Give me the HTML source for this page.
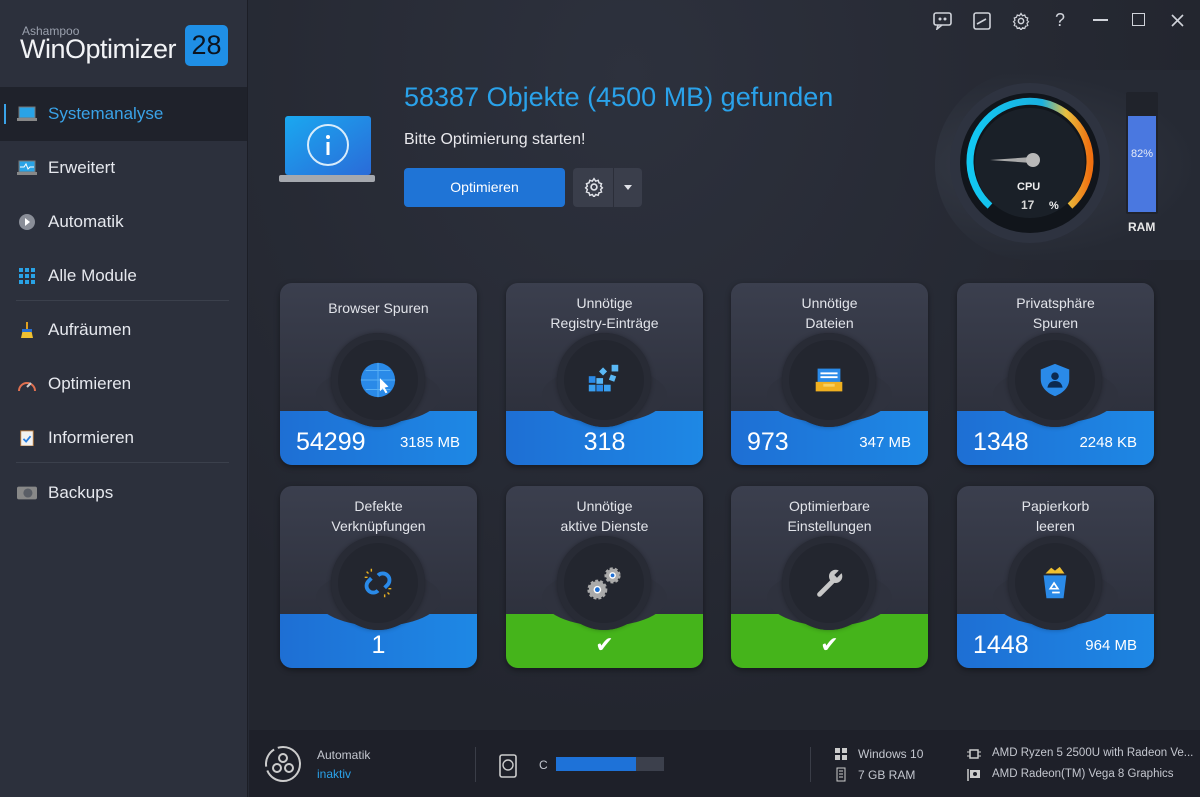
<!DOCTYPE html>
<html><head><meta charset="utf-8"><style>
*{margin:0;padding:0;box-sizing:border-box}
body{width:1200px;height:797px;overflow:hidden;background:#262a35;font-family:"Liberation Sans",sans-serif;color:#e6e8ee;position:relative}
.side{position:absolute;left:0;top:0;width:248px;height:797px;background:#2c303c;border-right:1px solid #1c1e26}
.logo1{position:absolute;left:22px;top:24px;font-size:12px;color:#9aa0ad}
.logo2{position:absolute;left:20px;top:34px;font-size:27px;color:#f2f3f6;letter-spacing:-0.5px}
.badge{position:absolute;left:185px;top:25px;width:43px;height:41px;background:#1f8fe6;border-radius:5px;color:#0c1420;font-size:27px;text-align:center;line-height:41px}
.nav{position:absolute;left:0;width:247px;height:54px;font-size:17px;line-height:54px;padding-left:48px}
.nav.sel{background:#1f222b;color:#3aa3e8}
.nav.sel:before{content:"";position:absolute;left:4px;top:17px;width:2px;height:20px;background:#3aa3e8}
.ic{position:absolute;left:17px;top:19px;width:20px;height:16px}
.sep{position:absolute;left:16px;width:213px;height:1px;background:#3b404c}
.main{position:absolute;left:249px;top:0;width:951px;height:730px;background:radial-gradient(ellipse at 40% 10%,#2d313d,#23262f 70%)}
.title{position:absolute;left:404px;top:82px;font-size:27px;color:#2aa2ea}
.sub{position:absolute;left:404px;top:131px;font-size:16px;color:#e8e8ec}
.btn{position:absolute;left:404px;top:168px;width:161px;height:39px;background:#1f74d6;border-radius:4px;text-align:center;line-height:39px;font-size:14px;color:#fff}
.gbtn{position:absolute;left:573px;top:168px;width:69px;height:39px;background:#3a3e4b;border-radius:4px}
.card{position:absolute;width:197px;height:182px;border-radius:12px;overflow:hidden;background:linear-gradient(#3b3f4e,#2e313d 70%);box-shadow:0 2px 6px rgba(0,0,0,.4)}
.card .t{position:absolute;top:10px;left:0;right:0;text-align:center;font-size:14px;line-height:20px;color:#e2e4ea}
.band{position:absolute;left:0;right:0;bottom:0;height:54px;background:linear-gradient(90deg,#1e6fd4,#1e88e5)}
.band.g{background:#45b41b}
.notch{position:absolute;left:36px;top:84px;width:125px;height:56px;border-radius:50%;background:#2f323e}
.circ{position:absolute;left:51px;top:50px;width:94px;height:94px;border-radius:50%;background:#23262f;box-shadow:inset 0 0 0 7px #282b35,0 0 5px rgba(0,0,0,.3)}
.n1{position:absolute;left:16px;bottom:8px;font-size:25px;color:#fff}
.n2{position:absolute;right:17px;bottom:14px;font-size:15px;color:#fff}
.nc{position:absolute;left:0;right:0;bottom:8px;text-align:center;font-size:25px;color:#fff}
.iconw{position:absolute;left:79px;top:78px;width:38px;height:38px}
.bot{position:absolute;left:249px;top:730px;width:951px;height:67px;background:#1e2029;font-size:12px;color:#c4c7cf;white-space:nowrap}
.tb{position:absolute;top:12px;color:#d0d3da;font-size:16px}
</style></head><body>
<div class="side">
 <div class="logo1">Ashampoo</div>
 <div class="logo2">WinOptimizer</div>
 <div class="badge">28</div>
 <div class="nav sel" style="top:87px"><svg class="ic" viewBox="0 0 20 16"><rect x="2" y="1" width="16" height="11" fill="#29a3e6" stroke="#777" /><rect x="0" y="12" width="20" height="3" fill="#888"/></svg>Systemanalyse</div>
 <div class="nav" style="top:141px"><svg class="ic" viewBox="0 0 20 16"><rect x="2" y="1" width="16" height="11" fill="#29a3e6" stroke="#777"/><path d="M3 7h4l2-3 2 5 2-2h4" stroke="#fff" fill="none"/><rect x="0" y="12" width="20" height="3" fill="#888"/></svg>Erweitert</div>
 <div class="nav" style="top:195px"><svg class="ic" viewBox="0 0 20 16"><circle cx="10" cy="8" r="8" fill="#8a8e98"/><path d="M8 4l5 4-5 4z" fill="#fff"/></svg>Automatik</div>
 <div class="nav" style="top:249px"><svg class="ic" viewBox="0 0 20 16"><g fill="#29a3e6"><rect x="2" y="0" width="4" height="4"/><rect x="8" y="0" width="4" height="4"/><rect x="14" y="0" width="4" height="4"/><rect x="2" y="6" width="4" height="4"/><rect x="8" y="6" width="4" height="4"/><rect x="14" y="6" width="4" height="4"/><rect x="2" y="12" width="4" height="4"/><rect x="8" y="12" width="4" height="4"/><rect x="14" y="12" width="4" height="4"/></g></svg>Alle Module</div>
 <div class="sep" style="top:300px"></div>
 <div class="nav" style="top:303px"><svg class="ic" viewBox="0 0 20 16"><rect x="9" y="0" width="2" height="7" fill="#e0a020"/><path d="M4 16l2-9h8l2 9z" fill="#f0c030"/><rect x="5" y="7" width="10" height="3" fill="#2a6fd0"/></svg>Aufräumen</div>
 <div class="nav" style="top:357px"><svg class="ic" viewBox="0 0 20 16"><path d="M2 15a8 8 0 1 1 16 0" stroke="#e07050" stroke-width="2" fill="none"/><path d="M10 11l4-4" stroke="#ccc" stroke-width="2"/></svg>Optimieren</div>
 <div class="nav" style="top:411px"><svg class="ic" viewBox="0 0 20 18"><rect x="3" y="1" width="14" height="17" fill="#f2f2f2" stroke="#c08040"/><path d="M6 10l3 3 5-6" stroke="#2a7fe0" stroke-width="2" fill="none"/></svg>Informieren</div>
 <div class="sep" style="top:462px"></div>
 <div class="nav" style="top:466px"><svg class="ic" viewBox="0 0 22 16"><rect x="0" y="1" width="22" height="14" rx="2" fill="#888"/><circle cx="12" cy="8" r="5" fill="#5a5e66"/></svg>Backups</div>
</div>
<div class="main"></div>
<div class="tb" style="left:933px"><svg width="20" height="18" viewBox="0 0 20 18"><rect x="1" y="1" width="17" height="12" rx="2" stroke="#d0d3da" fill="none" stroke-width="1.6"/><path d="M5 13l-1 4 5-4" stroke="#d0d3da" fill="none" stroke-width="1.6"/><circle cx="7" cy="7" r="1.5" fill="#d0d3da"/><circle cx="12" cy="7" r="1.5" fill="#d0d3da"/></svg></div>
<div class="tb" style="left:973px"><svg width="18" height="18" viewBox="0 0 18 18"><rect x="1" y="1" width="16" height="16" rx="2" stroke="#d0d3da" fill="none" stroke-width="1.6"/><path d="M4 12l9-5" stroke="#d0d3da" stroke-width="1.6"/></svg></div>
<div class="tb" style="left:1012px"><svg width="18" height="18" viewBox="0 0 24 24"><circle cx="12" cy="12" r="3.5" stroke="#d0d3da" fill="none" stroke-width="2"/><path d="M12 2l2 3 3-1 1 3 3 1-1 3 2 2-2 2 1 3-3 1-1 3-3-1-2 3-2-3-3 1-1-3-3-1 1-3-2-2 2-2-1-3 3-1 1-3 3 1z" stroke="#d0d3da" fill="none" stroke-width="1.6"/></svg></div>
<div class="tb" style="left:1055px;top:10px;font-size:18px">?</div>
<div class="tb" style="left:1093px;top:19px;width:15px;height:2px;background:#d0d3da"></div>
<div class="tb" style="left:1132px;top:13px;width:13px;height:13px;border:1.6px solid #d0d3da"></div>
<svg style="position:absolute;left:1171px;top:14px" width="13" height="13" viewBox="0 0 13 13"><path d="M1 1l11 11M12 1L1 12" stroke="#d0d3da" stroke-width="1.6"/></svg>
<svg style="position:absolute;left:279px;top:115px" width="98" height="70" viewBox="0 0 98 70"><defs><linearGradient id="lg" x1="0" y1="0" x2="1" y2="1"><stop offset="0" stop-color="#1aa8f0"/><stop offset="1" stop-color="#2a6bd8"/></linearGradient></defs><rect x="6" y="1" width="86" height="59" rx="3" fill="url(#lg)"/><rect x="0" y="60" width="96" height="7" rx="2" fill="#a5a8ae"/><circle cx="49" cy="30" r="20" stroke="#d8ecfb" stroke-width="2" fill="none"/><rect x="47.5" y="27" width="3" height="13" fill="#fff"/><circle cx="49" cy="22" r="2" fill="#fff"/></svg>
<div class="title">58387 Objekte (4500 MB) gefunden</div>
<div class="sub">Bitte Optimierung starten!</div>
<div class="btn">Optimieren</div>
<div class="gbtn"><svg style="position:absolute;left:11px;top:9px" width="20" height="20" viewBox="0 0 24 24"><circle cx="12" cy="12" r="3.5" stroke="#e0e2e8" fill="none" stroke-width="2"/><path d="M12 2l2 3 3-1 1 3 3 1-1 3 2 2-2 2 1 3-3 1-1 3-3-1-2 3-2-3-3 1-1-3-3-1 1-3-2-2 2-2-1-3 3-1 1-3 3 1z" stroke="#e0e2e8" fill="none" stroke-width="1.8"/></svg><div style="position:absolute;left:40px;top:0;width:1px;height:39px;background:#2b2e39"></div><div style="position:absolute;left:51px;top:17px;border:4px solid transparent;border-top:5px solid #e0e2e8"></div></div>
<!-- gauge -->
<div style="position:absolute;left:935px;top:70px;width:265px;height:190px;background:radial-gradient(ellipse at 30% 50%,#353a46,#262a34 70%);border-radius:95px 0 0 95px"></div>
<svg style="position:absolute;left:945px;top:78px" width="170" height="170" viewBox="0 0 170 170"><circle cx="85" cy="85" r="80" fill="#2e3340"/><circle cx="85" cy="85" r="70" fill="#11151b"/><defs><linearGradient id="ga" x1="0" y1="0" x2="1" y2="0"><stop offset="0" stop-color="#12c8f2"/><stop offset=".6" stop-color="#1ab0e0"/><stop offset=".8" stop-color="#e8c040"/><stop offset="1" stop-color="#f07010"/></linearGradient></defs><path d="M45 128A60 60 0 1 1 125 128" stroke="url(#ga)" stroke-width="7" fill="none"/><circle cx="85" cy="85" r="55" fill="#1a2028"/><path d="M45 82l42-3v6z" fill="#aaa"/><circle cx="88" cy="82" r="7" fill="#b8b8b8"/><text x="72" y="112" font-family="Liberation Sans" font-size="11" font-weight="bold" fill="#eee">CPU</text><text x="76" y="131" font-family="Liberation Sans" font-size="12" font-weight="bold" fill="#d8d8d8">17</text><text x="104" y="131" font-family="Liberation Sans" font-size="11" font-weight="bold" fill="#eee">%</text></svg>
<div style="position:absolute;left:1126px;top:92px;width:32px;height:122px;background:#20232b;border-radius:2px"></div>
<div style="position:absolute;left:1128px;top:116px;width:28px;height:96px;background:#4a78e0;color:#e6ebf8;font-size:11px;text-align:center;padding-top:32px">82%</div>
<div style="position:absolute;left:1128px;top:220px;font-size:12px;font-weight:bold;color:#e8e8e8">RAM</div>

<!-- cards -->
<div class="card" style="left:280px;top:283px"><div class="t" style="top:15px">Browser Spuren</div><div class="band"></div><div class="notch"></div><div class="circ"></div><svg class="iconw" viewBox="0 0 40 40"><circle cx="20" cy="20" r="18" fill="#2a8ae8"/><path d="M2 20h36M20 2v36M7 10h26M7 30h26" stroke="#5ab0f5" stroke-width="1" fill="none"/><path d="M22 18l0 14 3-3 3 5 2-1-3-5 4-1z" fill="#fff"/></svg><div class="n1">54299</div><div class="n2">3185 MB</div></div>
<div class="card" style="left:506px;top:283px"><div class="t">Unnötige<br>Registry-Einträge</div><div class="band"></div><div class="notch"></div><div class="circ"></div><svg class="iconw" viewBox="0 0 40 40"><g fill="#2a8ae8"><rect x="4" y="16" width="7" height="7"/><rect x="4" y="25" width="7" height="7" fill="#3aa0f0"/><rect x="12" y="25" width="7" height="7"/><rect x="20" y="25" width="7" height="7" fill="#3aa0f0"/><rect x="12" y="18" width="7" height="6" fill="#55b5f5"/></g><rect x="16" y="8" width="6" height="6" fill="#5ab8f5" transform="rotate(45 19 11)"/><rect x="28" y="4" width="7" height="7" fill="#5ab8f5"/><rect x="26" y="15" width="6" height="6" fill="#5ab8f5" transform="rotate(20 29 18)"/></svg><div class="nc">318</div></div>
<div class="card" style="left:731px;top:283px"><div class="t">Unnötige<br>Dateien</div><div class="band"></div><div class="notch"></div><div class="circ"></div><svg class="iconw" viewBox="0 0 40 40"><rect x="8" y="8" width="24" height="16" fill="#2a8ae8"/><rect x="11" y="12" width="18" height="2" fill="#fff"/><rect x="11" y="16" width="18" height="2" fill="#fff"/><path d="M6 22h28v10H6z" fill="#f0b020"/><rect x="14" y="24" width="12" height="3" fill="#f8d060"/></svg><div class="n1">973</div><div class="n2">347 MB</div></div>
<div class="card" style="left:957px;top:283px"><div class="t">Privatsphäre<br>Spuren</div><div class="band"></div><div class="notch"></div><div class="circ"></div><svg class="iconw" viewBox="0 0 40 40"><path d="M20 3l15 6v10c0 9-7 15-15 18C12 34 5 28 5 19V9z" fill="#2a8ae8"/><circle cx="20" cy="16" r="4" fill="#0c2a50"/><path d="M12 28c1-5 4-7 8-7s7 2 8 7z" fill="#0c2a50"/></svg><div class="n1">1348</div><div class="n2">2248 KB</div></div>

<div class="card" style="left:280px;top:486px"><div class="t">Defekte<br>Verknüpfungen</div><div class="band"></div><div class="notch"></div><div class="circ"></div><svg class="iconw" viewBox="0 0 40 40"><path d="M20 12a7 7 0 0 1 10 10l-3 3M20 28a7 7 0 0 1-10-10l3-3" stroke="#2a8ae8" stroke-width="4" fill="none"/><g stroke="#e8b020" stroke-width="1.5"><path d="M8 8l2 2M6 14h3M13 5v3M32 32l-2-2M34 26h-3M27 35v-3"/></g></svg><div class="nc">1</div></div>
<div class="card" style="left:506px;top:486px"><div class="t">Unnötige<br>aktive Dienste</div><div class="band g"></div><div class="notch"></div><div class="circ"></div><svg class="iconw" viewBox="0 0 40 40"><circle cx="13" cy="27" r="9" fill="#aaa" stroke="#aaa" stroke-width="3" stroke-dasharray="3 2"/><circle cx="13" cy="27" r="4" fill="#fff"/><circle cx="13" cy="27" r="2.5" fill="#1e6fd4"/><circle cx="29" cy="12" r="7" fill="#aaa" stroke="#aaa" stroke-width="3" stroke-dasharray="3 2"/><circle cx="29" cy="12" r="3.5" fill="#fff"/><circle cx="29" cy="12" r="2" fill="#1e6fd4"/></svg><div class="nc" style="bottom:10px;font-size:22px">✔</div></div>
<div class="card" style="left:731px;top:486px"><div class="t">Optimierbare<br>Einstellungen</div><div class="band g"></div><div class="notch"></div><div class="circ"></div><svg class="iconw" viewBox="0 0 40 40"><path d="M10 32l14-14" stroke="#c8c8c8" stroke-width="5" stroke-linecap="round"/><circle cx="27" cy="13" r="7" fill="#c8c8c8"/><path d="M27 13l6-6" stroke="#23262f" stroke-width="4"/></svg><div class="nc" style="bottom:10px;font-size:22px">✔</div></div>
<div class="card" style="left:957px;top:486px"><div class="t">Papierkorb<br>leeren</div><div class="band"></div><div class="notch"></div><div class="circ"></div><svg class="iconw" viewBox="0 0 40 40"><path d="M10 10l6-6 4 3 5-4 5 7z" fill="#f0c030"/><path d="M8 12h24l-3 24H11z" fill="#2a8ae8"/><path d="M15 26l4-6 4 6zM17 30h8" stroke="#fff" stroke-width="1.8" fill="none"/></svg><div class="n1">1448</div><div class="n2">964 MB</div></div>

<div class="bot">
 <svg style="position:absolute;left:15px;top:15px" width="38" height="38" viewBox="0 0 38 38"><path d="M19 2a17 17 0 0 1 0 34" stroke="#ccc" stroke-width="2" fill="none"/><path d="M19 36a17 17 0 0 1 0-34" stroke="#ccc" stroke-width="2" fill="none" stroke-dasharray="20 4"/><circle cx="19" cy="13" r="4" stroke="#ccc" stroke-width="2" fill="none"/><circle cx="13" cy="23" r="4" stroke="#ccc" stroke-width="2" fill="none"/><circle cx="25" cy="23" r="4" stroke="#ccc" stroke-width="2" fill="none"/></svg>
 <div style="position:absolute;left:68px;top:18px">Automatik</div>
 <div style="position:absolute;left:68px;top:37px;color:#2aa2ea">inaktiv</div>
 <div style="position:absolute;left:226px;top:17px;width:1px;height:35px;background:#3a3d47"></div>
 <svg style="position:absolute;left:250px;top:24px" width="18" height="24" viewBox="0 0 18 24"><rect x="1" y="1" width="16" height="22" rx="2" stroke="#ccc" stroke-width="1.6" fill="none"/><circle cx="9" cy="11" r="5" stroke="#ccc" stroke-width="1.4" fill="none"/></svg>
 <div style="position:absolute;left:290px;top:28px">C</div>
 <div style="position:absolute;left:307px;top:27px;width:108px;height:14px;background:#3c404c"><div style="width:80px;height:14px;background:#1e72d8"></div></div>
 <div style="position:absolute;left:561px;top:17px;width:1px;height:35px;background:#3a3d47"></div>
 <svg style="position:absolute;left:586px;top:18px" width="12" height="12" viewBox="0 0 12 12"><g fill="#ccc"><rect x="0" y="0" width="5" height="5"/><rect x="7" y="0" width="5" height="5"/><rect x="0" y="7" width="5" height="5"/><rect x="7" y="7" width="5" height="5"/></g></svg>
 <div style="position:absolute;left:609px;top:17px">Windows 10</div>
 <svg style="position:absolute;left:587px;top:37px" width="10" height="15" viewBox="0 0 10 15"><rect x="1" y="1" width="8" height="13" stroke="#ccc" fill="none"/><path d="M3 4h4M3 7h4M3 10h4" stroke="#ccc"/></svg>
 <div style="position:absolute;left:609px;top:38px">7 GB RAM</div>
 <svg style="position:absolute;left:718px;top:17px" width="14" height="14" viewBox="0 0 14 14"><rect x="3" y="3" width="8" height="8" stroke="#ccc" fill="none" stroke-width="1.5"/><path d="M0 5h3M0 9h3M11 5h3M11 9h3" stroke="#ccc"/></svg>
 <div style="position:absolute;left:743px;top:17px;font-size:11.5px">AMD Ryzen 5 2500U with Radeon Ve...</div>
 <svg style="position:absolute;left:718px;top:38px" width="14" height="13" viewBox="0 0 14 13"><path d="M1 1v12" stroke="#ccc" stroke-width="1.5"/><rect x="3" y="2" width="10" height="8" fill="#ccc"/><circle cx="8" cy="6" r="2" fill="#1e2029"/></svg>
 <div style="position:absolute;left:743px;top:38px;font-size:11.5px">AMD Radeon(TM) Vega 8 Graphics</div>
</div>
</body></html>
